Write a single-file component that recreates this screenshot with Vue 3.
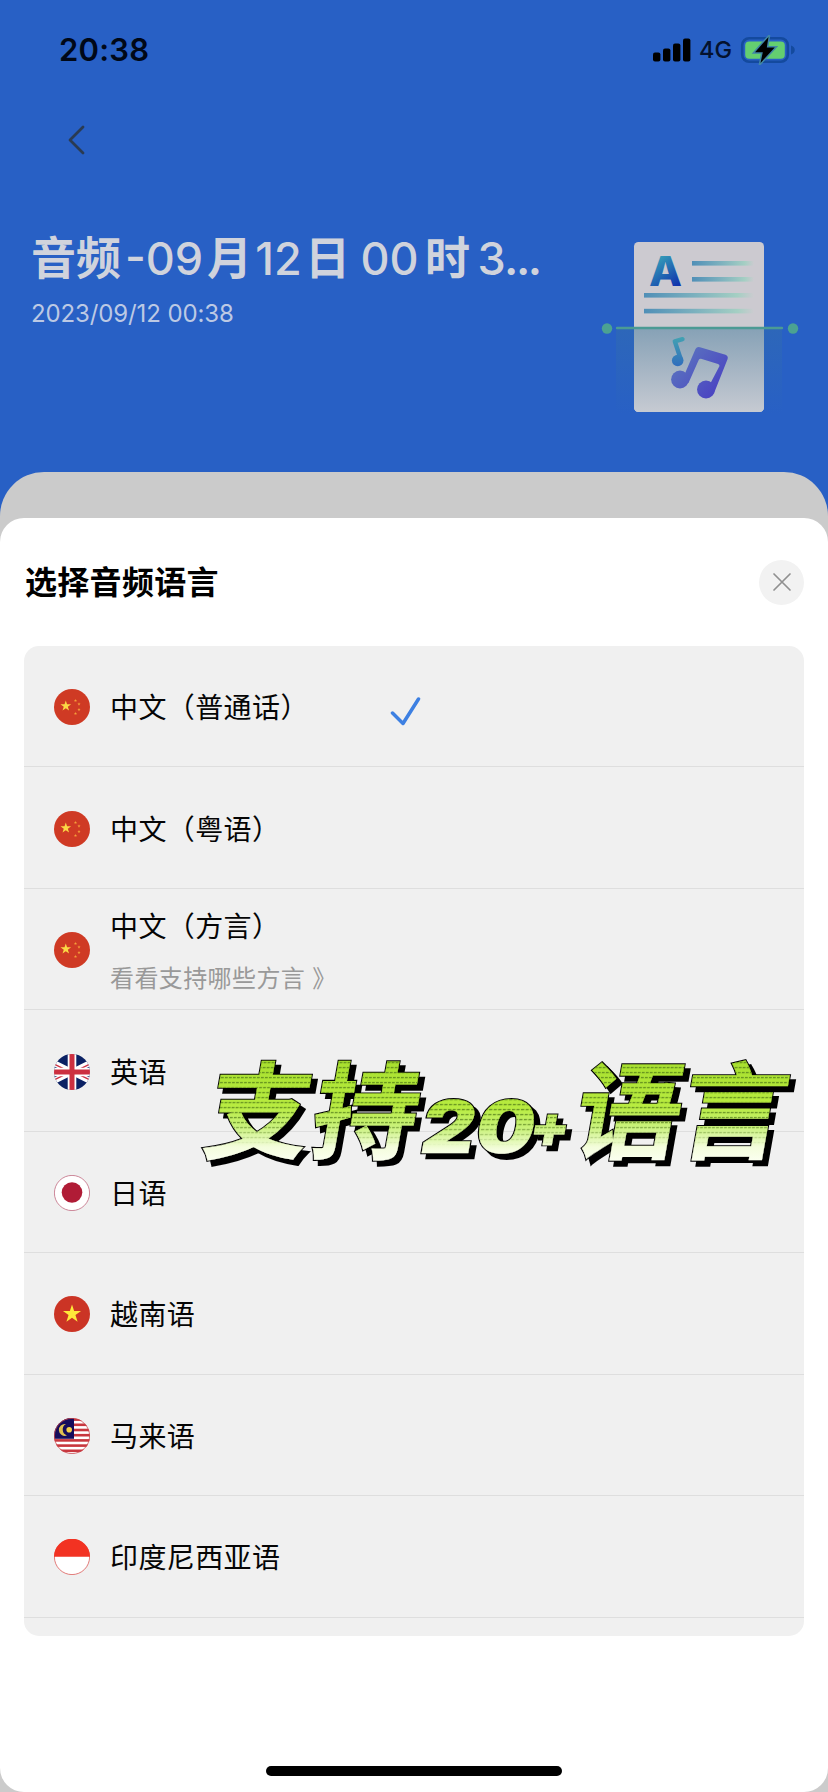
<script setup>
const languages = [
  { name: '中文（普通话）', flag: 'cn', selected: true },
  { name: '中文（粤语）', flag: 'cn' },
  { name: '中文（方言）', flag: 'cn', note: '看看支持哪些方言 》' },
  { name: '英语', flag: 'gb' },
  { name: '日语', flag: 'jp' },
  { name: '越南语', flag: 'vn' },
  { name: '马来语', flag: 'my' },
  { name: '印度尼西亚语', flag: 'id' },
]
const star = '0,-1 .225,-.309 .951,-.309 .363,.118 .588,.809 0,.382 -.588,.809 -.363,.118 -.951,-.309 -.225,-.309'
const smallStars = [[21.5, 11.5], [25, 15], [25, 20.5], [21.5, 24.5]]
</script>

<template>
  <main class="screen">
    <div class="status">
      <span class="clock">20:38</span>
      <div class="indicators">
        <svg class="signal" width="38" height="24" viewBox="0 0 38 24">
          <rect x="0" y="14.5" width="7.4" height="9" rx="2" />
          <rect x="10" y="10.5" width="7.4" height="13" rx="2" />
          <rect x="20" y="5.5" width="7.4" height="18" rx="2" />
          <rect x="30" y="0.5" width="7.4" height="23" rx="2" />
        </svg>
        <span class="network">4G</span>
        <svg class="battery" width="56" height="30" viewBox="0 0 56 30">
          <rect x="2.2" y="3.2" width="45.6" height="23.6" rx="7" fill="none" stroke="#144a9e" stroke-width="2.6" />
          <rect x="5.2" y="6.4" width="39.6" height="17.4" rx="4" fill="#64cf70" />
          <path d="M51 10.5c5 1.500 5 7.500 0 9z" fill="#144a9e" />
          <path d="M28.500 2 L15 17.300 H22.800 L20.500 28 L34.800 12.500 H26.800 Z" fill="#000" stroke="#3f86a6" stroke-width="3" paint-order="stroke" />
        </svg>
      </div>
    </div>

    <nav class="nav">
      <svg width="18" height="30" viewBox="0 0 18 30">
        <path d="M16 2 L3 15 L16 28" fill="none" stroke="#2a3b52" stroke-width="2.8" stroke-linecap="round" stroke-linejoin="round" />
      </svg>
    </nav>

    <header class="hero">
      <div class="heading">
        <h1><span>音频</span><span class="digits code">-09</span><span>月</span><span class="digits day">12</span><span>日</span><span class="digits hour">00</span><span>时</span><span class="digits minute">3</span><span class="dots">...</span></h1>
        <p>2023/09/12 00:38</p>
      </div>
      <svg class="art" width="238" height="220" viewBox="590 220 238 220">
        <defs>
          <linearGradient id="lower" x1="0" y1="0" x2="0" y2="1">
            <stop offset="0" stop-color="#86a1b6" /><stop offset="1" stop-color="#c6cad2" />
          </linearGradient>
          <linearGradient id="beam" x1="0" y1="0" x2="0" y2="1">
            <stop offset="0" stop-color="#38759f" stop-opacity=".32" /><stop offset="1" stop-color="#38759f" stop-opacity="0" />
          </linearGradient>
          <linearGradient id="rule" x1="0" y1="0" x2="1" y2="0">
            <stop offset="0" stop-color="#508fb7" /><stop offset=".45" stop-color="#7bb0be" /><stop offset=".85" stop-color="#a5cfc3" /><stop offset="1" stop-color="#cccbd0" />
          </linearGradient>
          <linearGradient id="letter" x1=".3" y1="0" x2=".8" y2="1">
            <stop offset="0.150" stop-color="#36a0b8" /><stop offset=".85" stop-color="#1134ad" />
          </linearGradient>
          <linearGradient id="minor" x1="0" y1="337" x2="0" y2="367" gradientUnits="userSpaceOnUse">
            <stop offset="0" stop-color="#42a2b2" /><stop offset="1" stop-color="#2f6cbd" />
          </linearGradient>
          <linearGradient id="major" x1="674" y1="352" x2="722" y2="396" gradientUnits="userSpaceOnUse">
            <stop offset="0" stop-color="#5c78bf" /><stop offset="1" stop-color="#493fc2" />
          </linearGradient>
        </defs>
        <rect x="616" y="328" width="166" height="86" fill="url(#beam)" />
        <rect x="634" y="242" width="130" height="170" rx="4.500" fill="#cccad0" />
        <path d="M634 328h130v79.500a4.500 4.500 0 0 1-4.500 4.500h-121a4.500 4.500 0 0 1-4.500-4.500z" fill="url(#lower)" />
        <text class="letter" x="649" y="286" textLength="33" lengthAdjust="spacingAndGlyphs" fill="url(#letter)">A</text>
        <rect x="692" y="261" width="62" height="4.600" fill="url(#rule)" />
        <rect x="692" y="277" width="62" height="4.600" fill="url(#rule)" />
        <rect x="644" y="293" width="110" height="4.600" fill="url(#rule)" />
        <rect x="644" y="308.800" width="110" height="4.600" fill="url(#rule)" />
        <path d="M617 328H782" stroke="#4b9a94" stroke-width="2.400" stroke-linecap="round" />
        <circle cx="607" cy="328.500" r="5.200" fill="#4ba292" />
        <circle cx="793" cy="328.500" r="5.200" fill="#4ba292" />
        <circle cx="677.700" cy="360.500" r="5.800" fill="url(#minor)" />
        <path d="M681 360 L674.800 341.300 L682.500 339.200" fill="none" stroke="url(#minor)" stroke-width="4.400" stroke-linecap="round" stroke-linejoin="round" />
        <circle cx="680" cy="379.500" r="8.900" fill="url(#major)" />
        <circle cx="706" cy="389.500" r="9" fill="url(#major)" />
        <path d="M683 378 L695.500 349 Q697 346.500 700 347.300 L725.500 354.800 Q728.500 356 727.600 359 L714.500 392 L709 386 L719.500 366 Q719.500 364.500 718 364 L701 358.800 Q699.500 358.500 698.700 360 L688.500 383 Z" fill="url(#major)" />
      </svg>
    </header>

    <section class="backdrop">
      <div class="sheet">
        <div class="sheet-head">
          <h2>选择音频语言</h2>
          <button class="close" aria-label="关闭">
            <svg width="20" height="20" viewBox="0 0 20 20">
              <path d="M2 2 L18 18 M18 2 L2 18" stroke="#909090" stroke-width="1.700" stroke-linecap="round" />
            </svg>
          </button>
        </div>

        <ul class="list">
          <li v-for="lang in languages" :key="lang.name" class="row">
            <svg class="flag" width="36" height="36" viewBox="0 0 36 36">
              <g v-if="lang.flag === 'cn'">
                <circle cx="18" cy="18" r="18" fill="#cf3a24" />
                <polygon :points="star" transform="translate(11.800 17) scale(5.600)" fill="#fbd845" />
                <polygon v-for="(s, i) in smallStars" :key="i" :points="star" :transform="`translate(${s[0]} ${s[1]}) scale(1.7)`" fill="#f5a03a" />
              </g>
              <g v-else-if="lang.flag === 'gb'" clip-path="url(#disc)">
                <rect width="36" height="36" fill="#0b2164" />
                <path d="M-9 4.500 L45 31.500 M45 4.500 L-9 31.500" stroke="#fff" stroke-width="6" />
                <path d="M-9 5.500 L18 19 M18 17 L45 30.500 M45 5.500 L18 19 M18 17 L-9 30.500" stroke="#cc3345" stroke-width="1.500" />
                <path d="M18 0V36M0 18H36" stroke="#fff" stroke-width="8.600" />
                <path d="M18 0V36M0 18H36" stroke="#cc3040" stroke-width="5" />
              </g>
              <g v-else-if="lang.flag === 'jp'">
                <circle cx="18" cy="18" r="17.600" fill="#fff" stroke="#c06a80" stroke-width=".8" />
                <circle cx="18" cy="17.500" r="10.300" fill="#b01c36" />
              </g>
              <g v-else-if="lang.flag === 'vn'">
                <circle cx="18" cy="18" r="18" fill="#cb3425" />
                <polygon :points="star" transform="translate(18 18) scale(9.500)" fill="#ffe83a" />
              </g>
              <g v-else-if="lang.flag === 'my'">
                <g clip-path="url(#disc)">
                  <rect width="36" height="36" fill="#fff" />
                  <rect v-for="n in 7" :key="n" x="0" :y="(n - 1) * 5.200 + 0.300" width="36" height="2.600" fill="#c8373e" />
                  <rect width="20" height="20.800" fill="#150c5c" />
                  <path d="M12 6 A6 6 0 1 0 13 17.500 A6.300 6.300 0 0 1 12 6Z" fill="#e0c050" />
                  <circle cx="15.200" cy="11.800" r="2.800" fill="#f5d04a" />
                </g>
                <circle cx="18" cy="18" r="17.600" fill="none" stroke="#c8474e" stroke-width=".8" />
              </g>
              <g v-else>
                <circle cx="18" cy="18" r="17.600" fill="#fff" stroke="#dc5a58" stroke-width=".8" />
                <path d="M0 17.700 A18 18 0 0 1 36 17.700Z" fill="#f23222" />
              </g>
            </svg>
            <div class="label">
              <span class="name">{{ lang.name }}</span>
              <span v-if="lang.note" class="note">{{ lang.note }}</span>
            </div>
            <svg v-if="lang.selected" class="check" width="32" height="30" viewBox="0 0 32 30">
              <path d="M2.500 16 L13 26.500 L28.500 2" fill="none" stroke="#3d80e2" stroke-width="3.500" stroke-linecap="round" stroke-linejoin="round" />
            </svg>
          </li>
        </ul>

        <div class="home-bar"></div>
      </div>
    </section>

    <svg class="sticker" width="628" height="140" viewBox="190 1040 628 140">
      <defs>
        <clipPath id="disc"><circle cx="18" cy="18" r="18" /></clipPath>
        <linearGradient id="lime" gradientUnits="userSpaceOnUse" x1="0" y1="-90" x2="0" y2="10">
          <stop offset="0" stop-color="#a8e02e" />
          <stop offset=".45" stop-color="#b8ec40" />
          <stop offset=".66" stop-color="#caf27c" />
          <stop offset=".86" stop-color="#f4fddc" />
          <stop offset="1" stop-color="#fbfff0" />
        </linearGradient>
        <linearGradient id="dashfade" gradientUnits="userSpaceOnUse" x1="0" y1="-90" x2="0" y2="10">
          <stop offset="0" stop-color="#fff" /><stop offset=".6" stop-color="#fff" /><stop offset=".85" stop-color="#000" />
        </linearGradient>
        <mask id="fade" maskUnits="userSpaceOnUse" x="150" y="-110" width="700" height="140">
          <rect x="150" y="-110" width="700" height="140" fill="url(#dashfade)" />
        </mask>
        <pattern id="dashes" width="4" height="5" patternUnits="userSpaceOnUse">
          <rect x="0" y="1" width="2.800" height="1" fill="#4a7416" />
        </pattern>
        <g id="slogan">
          <text class="han" x="200 307">支持</text>
          <text class="num" transform="translate(418 2) scale(1.140 1)" x="0 48">20</text>
          <text class="plus" x="526" y="-4">+</text>
          <text class="han" x="570 675">语言</text>
        </g>
      </defs>
      <g transform="translate(0 1151) skewX(-10)">
        <use href="#slogan" x="6" y="5" fill="#000" stroke="#000" stroke-width="2.400" />
        <use href="#slogan" fill="#000" stroke="#000" stroke-width="2.400" />
        <use href="#slogan" fill="url(#lime)" stroke="url(#lime)" stroke-width=".3" />
        <g mask="url(#fade)"><use href="#slogan" fill="url(#dashes)" /></g>
      </g>
    </svg>
  </main>
</template>

<style>
body { margin: 0; }
</style>

<style scoped>
.screen {
  position: relative;
  display: flex;
  flex-direction: column;
  width: 828px;
  height: 1792px;
  overflow: hidden;
  background: #2860c5;
  font-family: Inter, "Noto Sans CJK SC", sans-serif;
}
.status {
  display: flex;
  justify-content: space-between;
  align-items: center;
  height: 100px;
  padding: 0 32px 0 59px;
  box-sizing: border-box;
}
.clock { margin-top: -1px; font-size: 31px; font-weight: 600; letter-spacing: 0.2px; color: #000818; }
.indicators { display: flex; align-items: center; }
.network { margin-left: 8px; font-size: 23.5px; font-weight: 500; line-height: 28px; color: #04122e; width: 41px; }
.nav { height: 80px; padding-left: 67px; display: flex; align-items: center; }
.hero { display: flex; justify-content: space-between; height: 292px; }
.heading { padding: 49px 0 0 31px; color: #d0d3dc; }
h1 { display: flex; margin: 0; font-size: 45px; line-height: 60px; font-weight: 600; white-space: nowrap; }
.digits { box-sizing: border-box; text-align: center; font-weight: 500; }
.code { width: 86px; }
.day { width: 53px; }
.hour { width: 75px; padding-left: 4px; }
.minute { width: 43px; }
.dots { margin-left: -9px; letter-spacing: -2.500px; }
p { margin: 10px 0 0; font-size: 24px; line-height: 30px; letter-spacing: -0.120px; color: #bcc9e4; }
.art { margin-top: 40px; }
.backdrop {
  flex: 1;
  display: flex;
  padding-top: 46px;
  border-radius: 44px 44px 0 0;
  background: #cbcbcb;
}
.sheet {
  flex: 1;
  display: flex;
  flex-direction: column;
  border-radius: 24px;
  background: #fff;
}
.sheet-head {
  display: flex;
  justify-content: space-between;
  align-items: center;
  height: 128px;
  padding: 0 24px;
}
h2 { margin: 1px 0 0 1px; font-size: 32px; line-height: 44px; font-weight: 600; letter-spacing: 0.3px; color: #000; }
.close {
  display: grid;
  place-items: center;
  width: 45px;
  height: 45px;
  padding: 0;
  border: 0;
  border-radius: 50%;
  background: #f2f2f2;
}
.list {
  margin: 0 24px;
  padding: 0;
  height: 989.500px;
  overflow: hidden;
  list-style: none;
  border-radius: 15px;
  background: #f0f0f0;
}
.row {
  display: flex;
  align-items: center;
  box-sizing: border-box;
  height: 121.450px;
  padding-left: 30px;
  border-bottom: 1px solid #dedede;
}
.flag { flex: none; margin-top: 2px; }
.label { display: flex; flex-direction: column; width: 280px; margin: 4px 0 0 20px; white-space: nowrap; }
.name { font-size: 28px; line-height: 40px; letter-spacing: 0.4px; color: #050505; }
.note { font-size: 24px; line-height: 34px; letter-spacing: 0.4px; margin-top: 15px; color: #999; }
.check { margin-top: 11px; }
.home-bar { width: 296px; height: 10px; margin: auto auto 16px; border-radius: 5px; background: #000; }
.letter { font-family: Inter, sans-serif; font-size: 41px; font-weight: 800; }
.sticker { position: absolute; left: 190px; top: 1040px; overflow: visible; }
.han { font-family: "Noto Sans CJK SC", sans-serif; font-weight: 700; font-size: 106px; }
.num { font-family: Inter, sans-serif; font-weight: 900; font-size: 73px; }
.plus { font-family: Inter, sans-serif; font-weight: 900; font-size: 58px; }
</style>
